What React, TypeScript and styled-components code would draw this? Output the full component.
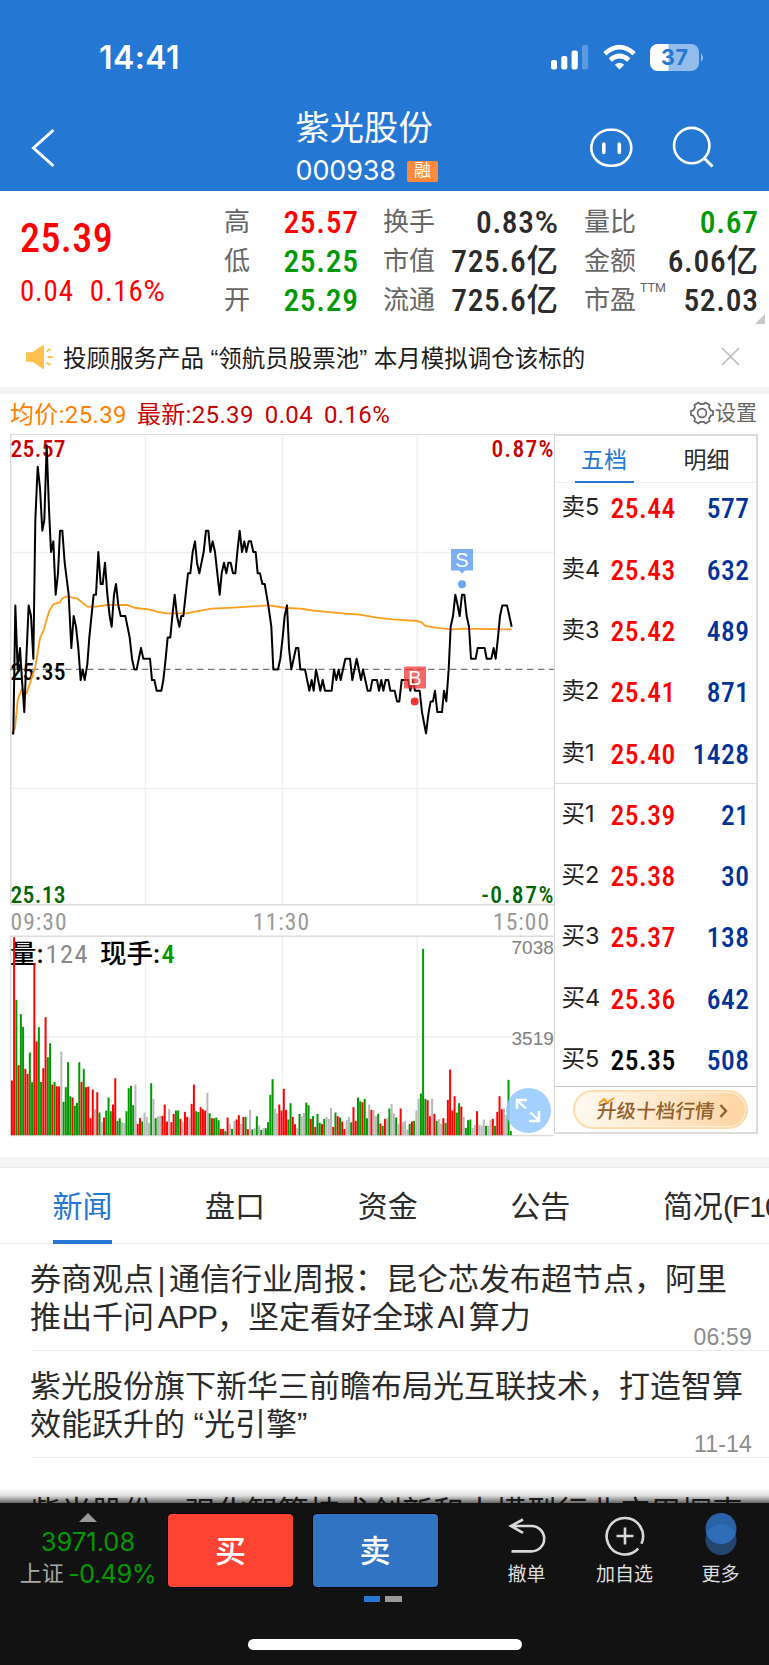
import React from 'react';
import styled, { createGlobalStyle } from 'styled-components';

const sans = `Inter, "Noto Sans CJK SC", sans-serif`;
const cjk = `"Liberation Sans", "Noto Sans CJK SC", sans-serif`;
const din = `Roboto, "Noto Sans CJK SC", sans-serif`;

const RED = '#ff0000';
const GREEN = '#009900';
const INK = '#2b2b2b';

const Global = createGlobalStyle`
  * { box-sizing: border-box; }
  body { margin: 0; background: #fff; font-family: ${cjk}; }
  svg { display: block; }
`;

const Screen = styled.main`
  width: 769px;
  height: 1665px;
  overflow: hidden;
  display: flex;
  flex-direction: column;
  background: #fff;
  color: ${INK};
  white-space: nowrap;
`;

/* ---------- header ---------- */
const Header = styled.header`
  flex: none;
  height: 191px;
  background: #2478d4;
  color: #fff;
`;
const StatusBar = styled.div`
  height: 106px;
  padding: 9px 64px 0 99px;
  display: flex;
  align-items: center;
  justify-content: space-between;
`;
const Clock = styled.span`
  font: 600 32px ${sans};
  letter-spacing: 0.4px;
`;
const NavBar = styled.div`
  height: 85px;
  display: grid;
  grid-template-columns: 295.5px 1fr auto;
  padding-right: 54px;
`;
const BackIcon = styled.svg`
  margin: 22px 0 0 30px;
`;
const TitleBlock = styled.div`
  display: flex;
  flex-direction: column;
`;
const StockName = styled.h1`
  margin: 1px 0 0;
  font: 400 34.3px/42px ${cjk};
`;
const CodeRow = styled.div`
  display: flex;
  align-items: center;
  gap: 11px;
  height: 24px;
  margin-top: 10px;
  font: 400 27px/24px ${sans};
  letter-spacing: -0.15px;
`;
const Badge = styled.span`
  width: 31px;
  height: 21px;
  border-radius: 2px;
  background: #ff8a3c;
  font: 400 17px/20px ${cjk};
  text-align: center;
`;
const NavIcons = styled.div`
  display: flex;
  gap: 39px;
  padding-top: 20px;
`;

/* ---------- quote ---------- */
const Quote = styled.section`
  flex: none;
  height: 136px;
  display: flex;
  padding: 12px 11px 0 20px;
  position: relative;
`;
const Headline = styled.div`
  width: 204px;
  color: ${RED};
  font-family: ${din};
  font-stretch: 87.5%;
`;
const LastPrice = styled.div`
  font-size: 40px;
  font-weight: 500;
  line-height: 48px;
  padding-top: 12px;
  letter-spacing: 0.4px;
`;
const Change = styled.div`
  display: flex;
  gap: 16px;
  margin-top: 8px;
  font-size: 29px;
  line-height: 40px;
  letter-spacing: 0.8px;
`;
const Percent = styled.span`
  font-stretch: 100%;
`;
const StatGroup = styled.div<{ $w: number; $ml?: number }>`
  width: ${p => p.$w}px;
  margin-left: ${p => p.$ml ?? 0}px;
`;
const Stat = styled.div`
  display: flex;
  justify-content: space-between;
  height: 39px;
  align-items: center;
`;
const StatLabel = styled.span`
  font: 400 26px/39px ${cjk};
  color: #666;
  display: flex;
`;
const Sup = styled.small`
  font: 400 12.5px/13px ${din};
  margin: 0 0 0 4px;
`;
const StatValue = styled.span<{ $c?: string }>`
  font: 480 31.5px/39px ${din};
  font-stretch: 87.5%;
  letter-spacing: 0.7px;
  margin-right: -0.7px;
  color: ${p => p.$c ?? INK};
`;
const Corner = styled.svg`
  position: absolute;
  right: 4px;
  bottom: 3px;
`;

/* ---------- notice ---------- */
const Notice = styled.section`
  flex: none;
  height: 60px;
  padding: 0 29px 1px 25px;
  display: flex;
  align-items: center;
  font-size: 23.5px;
  color: #1c1c1c;
`;
const NoticeText = styled.span`
  flex: 1;
  margin-left: 10px;
`;
const Band = styled.div<{ $h: number }>`
  flex: none;
  height: ${p => p.$h}px;
  background: #f4f4f4;
`;

/* ---------- chart ---------- */
const Legend = styled.div`
  flex: none;
  height: 40px;
  display: flex;
  align-items: center;
  padding: 1px 12px 0 10px;
  font: 400 24px/38px ${din};
  letter-spacing: 0.35px;
  color: #c80000;
`;
const LegendItem = styled.span<{ $c?: string; $ml?: number }>`
  color: ${p => p.$c ?? '#c80000'};
  margin-left: ${p => p.$ml ?? 0}px;
`;
const Settings = styled.span`
  margin-left: auto;
  display: flex;
  align-items: center;
  gap: 1px;
  margin-bottom: 3px;
  font: 400 21px/24px ${cjk};
  letter-spacing: 0;
  color: #666;
`;
const Market = styled.section`
  flex: none;
  display: flex;
  height: 723px;
  padding-left: 10px;
`;
const ChartColumn = styled.div`
  width: 543.5px;
  position: relative;
`;
const ExpandButton = styled.button`
  position: absolute;
  left: 496px;
  top: 654px;
  width: 45px;
  height: 45px;
  padding: 0;
  border: 0;
  border-radius: 50%;
  background: rgba(150, 201, 255, 0.88);
`;
const ChartText = styled.text<{ $font?: string }>`
  font-family: ${p => p.$font ?? din};
  font-stretch: 87.5%;
`;

/* ---------- order book ---------- */
const Book = styled.aside`
  width: 204px;
  height: 700px;
  border: 2px solid #dcdcdc;
  border-left: 1px solid #d4d4d4;
  display: flex;
  flex-direction: column;
`;
const BookTabs = styled.div`
  flex: none;
  height: 47px;
  display: flex;
  border-bottom: 1px solid #eee;
  padding-left: 20px;
  gap: 34px;
`;
const BookTab = styled.span<{ $on?: boolean }>`
  width: ${p => (p.$on ? 59 : 78)}px;
  height: 47px;
  text-align: center;
  font: 400 23px/48px ${cjk};
  color: ${p => (p.$on ? '#2478d4' : INK)};
  border-bottom: ${p => (p.$on ? '2px solid #2478d4' : '0')};
`;
const Levels = styled.div<{ $buy?: boolean }>`
  height: ${p => (p.$buy ? 303 : 301)}px;
  padding-top: ${p => (p.$buy ? 1 : 0)}px;
  border-bottom: 1px solid ${p => (p.$buy ? '#c4c4c4' : '#dcdcdc')};
`;
const Level = styled.div`
  display: grid;
  grid-template-columns: 49px 1fr auto;
  align-items: center;
  height: 61.35px;
  padding: 0 6px 0 7px;
`;
const SellLevels = styled(Levels)`
  margin-top: -4.5px;
  height: 305.5px;
`;
const LevelLabel = styled.span`
  font: 400 23.5px/30px ${sans};
  color: #222;
  margin-top: -4px;
`;
const LevelPrice = styled.span<{ $c?: string }>`
  font: 500 27.5px/30px ${din};
  font-stretch: 87.5%;
  letter-spacing: 0.5px;
  color: ${p => p.$c ?? RED};
`;
const UpgradeWrap = styled.div`
  flex: 1;
  display: flex;
  align-items: center;
  padding-left: 18px;
`;
const Upgrade = styled.button`
  width: 175px;
  height: 39px;
  padding: 2px 0 0 22px;
  border: 2px solid #ffdcb0;
  border-radius: 20px;
  background: linear-gradient(100deg, #fffaf3, #ffe9cf 45%, #ffd3a0);
  box-shadow: inset 0 0 0 1px rgba(255, 246, 232, 0.9);
  display: flex;
  align-items: center;
  gap: 5px;
  color: #94602b;
  font: 500 19.6px/30px ${cjk};
`;
const UpgradeText = styled.span`
  position: relative;
  transform: skewX(-6deg);
`;
const Spark = styled.svg`
  position: absolute;
  left: 0;
  top: 1px;
`;

/* ---------- news ---------- */
const Tabs = styled.nav`
  flex: none;
  height: 77px;
  border-top: 1px solid #e9e9e9;
  border-bottom: 1px solid #ececec;
  padding-left: 52.5px;
  display: flex;
`;
const Tab = styled.a<{ $on?: boolean }>`
  flex: none;
  width: 152.6px;
  font: 400 30px/78px ${cjk};
  color: ${p => (p.$on ? '#2478d4' : INK)};
  &::after {
    content: '';
    display: ${p => (p.$on ? 'block' : 'none')};
    width: 59px;
    height: 4px;
    margin-top: -6px;
    background: #2478d4;
  }
`;
const TabCode = styled.span`
  letter-spacing: -1px;
`;
const News = styled.article`
  flex: none;
  height: 107px;
  margin-left: 31px;
  padding-top: 3px;
  border-bottom: 1px solid #ececec;
  display: flex;
  flex-direction: column;
  justify-content: center;
  position: relative;
`;
const NewsTitle = styled.div<{ $tight?: boolean }>`
  margin-left: -1px;
  font: 400 31px/37.5px ${cjk};
  white-space: pre;
  word-spacing: ${p => (p.$tight ? -5 : 0)}px;
`;
const Latin = styled.span`
  letter-spacing: -0.9px;
`;
const Pipe = styled.span`
  padding: 0 3.5px;
`;
const NewsTime = styled.time`
  position: absolute;
  right: 17px;
  bottom: 0;
  font: 400 23px/26px ${cjk};
  letter-spacing: 0.2px;
  color: #8c8c8c;
`;
const NewsList = styled.div`
  flex: none;
  height: 259px;
  overflow: hidden;
  position: relative;
  &::after {
    content: '';
    position: absolute;
    inset: auto 0 0 0;
    height: 15px;
    background: linear-gradient(rgba(0, 0, 0, 0), rgba(0, 0, 0, 0.12) 50%, rgba(0, 0, 0, 0.6));
  }
`;

/* ---------- bottom bar ---------- */
const Footer = styled.footer`
  flex: none;
  height: 162px;
  background: #121212;
  display: flex;
  flex-direction: column;
  align-items: center;
`;
const Actions = styled.div`
  width: 100%;
  height: 93px;
  display: flex;
  padding: 10px 0 0 16px;
`;
const Index = styled.div`
  width: 144px;
  display: flex;
  flex-direction: column;
  align-items: center;
  color: ${GREEN};
  font: 400 25.5px/32px ${sans};
`;
const IndexValue = styled.span`
  letter-spacing: 0;
  margin-top: 4px;
`;
const IndexLine = styled.span`
  display: flex;
  align-items: center;
  gap: 4px;
  letter-spacing: -0.6px;
`;
const IndexName = styled.span`
  font: 400 22px/32px ${cjk};
  color: #a8a8a8;
  letter-spacing: 0;
`;
const TradeButton = styled.button<{ $bg: string }>`
  width: 125px;
  height: 73px;
  margin: 1px 0 0 ${p => (p.$bg === '#ff4332' ? 8 : 19.5)}px;
  padding: 3px 0 0;
  border: 0;
  border-radius: 4px;
  background: ${p => p.$bg};
  box-shadow: 0 0 0 1px #000;
  color: #fff;
  font: 500 31px/40px ${cjk};
`;
const Tools = styled.div`
  display: flex;
  margin-left: 53px;
`;
const Tool = styled.div<{ $w: number }>`
  width: ${p => p.$w}px;
  display: flex;
  flex-direction: column;
  align-items: center;
  font: 400 19px/26px ${cjk};
  color: #dedede;
  gap: 5px;
`;
const Pager = styled.div`
  display: flex;
  gap: 5px;
  margin-left: -4px;
`;
const Page = styled.i<{ $c: string }>`
  width: 16.5px;
  height: 6px;
  background: ${p => p.$c};
`;
const HomeIndicator = styled.div`
  width: 274px;
  height: 11px;
  margin-top: 37px;
  border-radius: 6px;
  background: #fff;
`;

/* ---------- chart data ---------- */
// One tick is 0.01 yuan; x is measured in thirds of a pixel from the left edge.
const PRICE: number[] = [
  36,-6,40,-6,46,6,53,0,60,2,66,-1,73,-4,79,1,86,6,93,5,100,1,106,14,113,19,120,17,127,13,133,14,140,21,147,15,153,11,160,12,167,7,174,9,180,13,187,13,194,10,206,7,
  214,2,221,5,228,4,235,2,242,-1,248,0,254,-1,262,0.5,268,3,281,7,288,7,295,11,302,8,308,8,315,10,322,7,329,5,335,4,342,7,348,8,355,6,362,5,376,5,389,3,396,1,403,0,
  410,0,423,2,430,1,450,1,456,-1,463,-1,470,-2,484,-2,490,-1,497,1,503,3,511,3,517,5,524,7,531,5,538,4,544,5,550,5,557,7,564,9,571,9,578,11,585,12,591,10,598,9,611,11,
  618,13,625,13,631,11,638,12,645,11,652,9,659,7,665,9,672,10,679,9,685,10,692,10,699,9,706,9,712,11,719,13,726,11,733,12,739,11,746,12,753,12,760,11,767,11,773,9,780,9,
  787,8,794,8,805,6,814,4,820,0,834,0,841,1,848,3,854,5,861,6,867,2,874,0,888,2,895,2,901,0,915,0,928,-2,935,-1,941,-2,948,0,961,-2,968,-1,975,-2,995,-2,1002,0,1009,-1,
  1016,0,1022,-1,1036,1,1050,1,1057,-1,1070,1,1083,-1,1089,0,1103,-2,1111,-2,1117,-1,1131,-1,1137,-2,1144,-1,1150,-2,1157,-1,1165,-1,1171,-2,1184,-2,1191,-3,1198,-3,
  1205,-1,1225,-1,1231,-2,1238,-1,1245,-2,1259,-2,1266,-4,1278,-6,1286,-4,1292,-3,1299,-3,1305,-2,1312,-4,1326,-4,1332,-2,1339,-3,1346,0,1352,4,1359,5,1366,7,1373,6,
  1379,5,1386,7,1393,7,1400,5,1407,4,1413,1,1427,1,1433,2,1454,2,1460,1,1474,1,1481,2,1487,1,1494,3,1500,5,1507,6,1521,6,1528,5,1535,4,
];
const AVERAGE: number[] = [
  36,940,45,925,53,840,66,805,80,820,93,780,106,740,120,655,133,625,140,598,148,572,160,553,180,547,187,535,200,529,232,536,262,560,290,560,320,555,380,555,408,564,450,569,
  470,575,500,580,560,580,590,574,635,566,700,563,805,556,860,564,901,566,910,567,940,572,1030,580,1080,584,1130,593,1180,598,1250,603,1265,607,1275,617,1300,622,1355,628,1390,626,1535,628,
];
// Per-minute volume: direction (r up, g down, n flat) and the bar's top.
const VOLUME =
  'r632 r202 g390 r586 g433 g471 r597 r612 g548 g637 r280 r515 g472 g636 r595 r442 g562 g520 r644 g636 r649 r650 n545 g696 g652 g577 g679 r683 g708 g699 g577 r636 g597 r652 r650 r745 r659 n718 r667 g728 ' +
  'n756 r743 g722 g683 g724 r704 r625 g753 g745 n757 n760 g724 g655 g648 g706 n644 r762 r745 g755 n728 n741 n759 g640 n687 g745 n740 n738 r738 r704 r755 n718 r757 r732 g722 g722 r747 n757 r726 r741 n743 ' +
  'r702 r644 g724 g726 r712 r718 r722 n669 g730 r745 g745 g743 g751 r777 r777 g784 r743 n763 g777 n753 r749 r736 n762 r741 g741 r778 n720 g779 n775 g739 n767 g780 n775 g775 g757 g675 g628 n716 n730 r704 ' +
  'r722 r657 r720 g749 g700 r741 r763 n775 g732 n739 n729 g698 g706 r747 g739 r771 g732 g759 r763 g747 n741 n747 n714 r771 g728 r739 g743 r755 r777 n751 n741 g757 r712 r753 g683 g694 r697 g687 g745 n704 ' +
  'r720 n722 n739 g732 r761 g768 r747 n745 g716 n702 n730 g743 n763 r716 n757 n753 n779 g762 r755 g753 n722 n687 g671 g237 g687 r691 r739 n687 r732 g753 n748 n762 r745 g759 r690 r599 r722 r679 g728 g700 ' +
  'r710 n741 g774 g751 g749 n774 n765 r724 n765 n767 n749 g768 n768 n751 r747 g768 r726 r679 r718 n716 n735 g630 g783';

const pairs = (a: number[], y: (v: number) => number) => {
  const out: string[] = [];
  for (let i = 0; i < a.length; i += 2) out.push(`${(a[i] / 3 - 10).toFixed(2)},${y(a[i + 1]).toFixed(2)}`);
  return out.join(' ');
};
const pricePoints = pairs(PRICE, v => 235.4 - v * 10.67);
const averagePoints = pairs(AVERAGE, v => v / 3 - 14);
const barColor: Record<string, string> = { r: '#ff0000', g: '#009900', n: '#b8b8b8' };
const bars = VOLUME.split(' ').map((s, i) => {
  const h = (796 - Number(s.slice(1))) / 3;
  return { x: (35.6 + 6.742 * i) / 3 - 11, y: 701.2 - h, h, fill: barColor[s[0]] };
});

const Chart = () => (
  <svg width="544" height="710" viewBox="0 0 544 710">
    <g stroke="#f0f0f0" strokeWidth="1.4">
      {[135.4, 272.5, 407.2].map(x => (
        <path key={x} d={`M${x} 1V470.5M${x} 502V701`} />
      ))}
      <path d="M1 118.5H544M1 354.5H544M1 603H544" />
    </g>
    <g stroke="#dcdcdc" strokeWidth="1.4" fill="none">
      <path d="M0.7 471V0.3H544M0.7 470.7H544M0.7 701.5V502.3H544M0.7 701.5H544" />
    </g>
    <path d="M0 235.4H544" stroke="#777" strokeWidth="1.3" strokeDasharray="6.5 4.5" />
    <g fontSize="23.5" fontWeight="480">
      <ChartText x="0.5" y="22.5" fill="#c80000" textLength="55">25.57</ChartText>
      <ChartText x="481.5" y="22.5" fill="#c80000" textLength="62">0.87%</ChartText>
      <ChartText x="0.5" y="468.5" fill="#006600" textLength="55">25.13</ChartText>
      <ChartText x="471.5" y="468.5" fill="#006600" textLength="72">-0.87%</ChartText>
      <ChartText x="0.5" y="245.5" fill="#000" textLength="55">25.35</ChartText>
      <g fill="#999" fontWeight="400">
        <ChartText x="0.5" y="496" textLength="56">09:30</ChartText>
        <ChartText x="243" y="496" textLength="56">11:30</ChartText>
        <ChartText x="483" y="496" textLength="56">15:00</ChartText>
      </g>
    </g>
    <polyline points={averagePoints} fill="none" stroke="#ff9d1c" strokeWidth="1.8" />
    <polyline points={pricePoints} fill="none" stroke="#000" strokeWidth="2" strokeLinejoin="round" />
    <g fontSize="26.5" fontWeight="500">
      <ChartText x="0" y="528.5" fill="#000">量:</ChartText>
      <ChartText x="35.5" y="528.5" fill="#8a8a8a" fontWeight="400" textLength="42">124</ChartText>
      <ChartText x="90" y="528.5" fill="#000">现手:</ChartText>
      <ChartText x="151.5" y="528.5" fill={GREEN}>4</ChartText>
    </g>
    <g fontSize="19" fill="#808080">
      <ChartText $font={cjk} x="501.5" y="519.5">7038</ChartText>
      <ChartText $font={cjk} x="501.5" y="611">3519</ChartText>
    </g>
    {bars.map((b, i) => (
      <rect key={i} x={b.x} y={b.y} width="2" height={b.h} fill={b.fill} />
    ))}
    <g fill="#6ba6f2">
      <path d="M441 115H463V136.5H455L452 139.5L449 136.5H441Z" opacity="0.9" />
      <circle cx="452" cy="150.3" r="4" />
    </g>
    <g fill="#f03535">
      <rect x="394" y="232.5" width="22" height="22" rx="1" opacity="0.75" />
      <circle cx="404.7" cy="267.6" r="4" />
    </g>
    <g fill="#fff" fontSize="20" textAnchor="middle">
      <ChartText $font={cjk} x="452" y="133">S</ChartText>
      <ChartText $font={cjk} x="405" y="250.5">B</ChartText>
    </g>
  </svg>
);

const sells = [['卖5', '25.44', '577'], ['卖4', '25.43', '632'], ['卖3', '25.42', '489'], ['卖2', '25.41', '871'], ['卖1', '25.40', '1428']];
const buys = [['买1', '25.39', '21'], ['买2', '25.38', '30'], ['买3', '25.37', '138'], ['买4', '25.36', '642'], ['买5', '25.35', '508']];

const LevelRow = ({ row }: { row: string[] }) => (
  <Level>
    <LevelLabel>{row[0]}</LevelLabel>
    <LevelPrice $c={row[1] === '25.35' ? '#000' : RED}>{row[1]}</LevelPrice>
    <LevelPrice $c="#003399">{row[2]}</LevelPrice>
  </Level>
);

const StatusIcons = () => (
  <svg width="156" height="32" viewBox="550 42 156 32" fill="#fff">
    <rect x="552" y="60" width="6" height="9.5" rx="2" />
    <rect x="562.3" y="56" width="6" height="13.5" rx="2" />
    <rect x="572.6" y="50.5" width="6.2" height="19" rx="2" />
    <rect x="583" y="45" width="6.2" height="24.5" rx="2" opacity="0.25" />
    <g fill="none" stroke="#fff" strokeWidth="4.6">
      <path d="M605.8 53.8Q620.5 40.5 635.2 53.8" />
      <path d="M611.2 60Q620.5 52 629.8 60" />
    </g>
    <path d="M615.8 64.8Q620.5 60.8 625.2 64.8L620.5 69.5Z" />
    <rect x="651" y="44" width="49" height="27" rx="8" opacity="0.5" />
    <path d="M659 44H669.5V71H659A8 8 0 0 1 651 63V52A8 8 0 0 1 659 44Z" />
    <path d="M702 53Q706 57.5 702 62Z" opacity="0.5" />
    <ChartText $font={sans} x="675.5" y="65.3" fill="#2478d4" fontSize="21.5" fontWeight="700" textAnchor="middle" textLength="27">37</ChartText>
  </svg>
);

export default function App() {
  return (
    <Screen>
      <Global />
      <Header>
        <StatusBar>
          <Clock>14:41</Clock>
          <StatusIcons />
        </StatusBar>
        <NavBar>
          <BackIcon width="26" height="40" viewBox="0 0 26 40" fill="none" stroke="#fff" strokeWidth="3">
            <path d="M23.5 2L3.5 20L23.5 38" />
          </BackIcon>
          <TitleBlock>
            <StockName>紫光股份</StockName>
            <CodeRow>000938<Badge>融</Badge></CodeRow>
          </TitleBlock>
          <NavIcons>
            <svg width="44" height="44" viewBox="0 0 44 44" fill="none" stroke="#fff" strokeWidth="2.6">
              <rect x="2.3" y="3.8" width="40" height="36" rx="19" ry="18" />
              <path d="M14.8 18V26.5M30.3 18V26.5" strokeWidth="3.6" strokeLinecap="round" />
            </svg>
            <svg width="43" height="44" viewBox="0 0 43 44" fill="none" stroke="#fff" strokeWidth="2.6">
              <circle cx="19.7" cy="19.6" r="17.7" />
              <path d="M32.5 32.5L40.5 40.5" strokeWidth="3" />
            </svg>
          </NavIcons>
        </NavBar>
      </Header>

      <Quote>
        <Headline>
          <LastPrice>25.39</LastPrice>
          <Change><span>0.04</span><span>0.16<Percent>%</Percent></span></Change>
        </Headline>
        <StatGroup $w={134}>
          <Stat><StatLabel>高</StatLabel><StatValue $c={RED}>25.57</StatValue></Stat>
          <Stat><StatLabel>低</StatLabel><StatValue $c={GREEN}>25.25</StatValue></Stat>
          <Stat><StatLabel>开</StatLabel><StatValue $c={GREEN}>25.29</StatValue></Stat>
        </StatGroup>
        <StatGroup $w={175} $ml={25}>
          <Stat><StatLabel>换手</StatLabel><StatValue>0.83<Percent>%</Percent></StatValue></Stat>
          <Stat><StatLabel>市值</StatLabel><StatValue>725.6亿</StatValue></Stat>
          <Stat><StatLabel>流通</StatLabel><StatValue>725.6亿</StatValue></Stat>
        </StatGroup>
        <StatGroup $w={174} $ml={26}>
          <Stat><StatLabel>量比</StatLabel><StatValue $c={GREEN}>0.67</StatValue></Stat>
          <Stat><StatLabel>金额</StatLabel><StatValue>6.06亿</StatValue></Stat>
          <Stat><StatLabel>市盈<Sup>TTM</Sup></StatLabel><StatValue>52.03</StatValue></Stat>
        </StatGroup>
        <Corner width="10" height="10"><path d="M10 0V10H0Z" fill="#c8c8c8" /></Corner>
      </Quote>

      <Notice>
        <svg width="28" height="26" viewBox="0 0 28 26">
          <path d="M1.8 8.3H7.5L17.6 1.2Q19 0.6 19 2V24Q19 25.4 17.6 24.8L7.5 17.7H1.8Q1 17.7 1 16.9V9.1Q1 8.3 1.8 8.3Z" fill="#ffc04d" />
          <path d="M22.5 13H28M21.5 7.5L25.5 4.8M21.5 18.5L25.5 21.2" stroke="#ffc04d" strokeWidth="2" />
        </svg>
        <NoticeText>投顾服务产品 “领航员股票池” 本月模拟调仓该标的</NoticeText>
        <svg width="19" height="19" viewBox="0 0 19 19" stroke="#bbb" strokeWidth="1.6"><path d="M1 1L18 18M18 1L1 18" /></svg>
      </Notice>
      <Band $h={7} />

      <Legend>
        <LegendItem $c="#ff8000">均价:25.39</LegendItem>
        <LegendItem $ml={10}>最新:25.39</LegendItem>
        <LegendItem $ml={11}>0.04</LegendItem>
        <LegendItem $ml={11}>0.16%</LegendItem>
        <Settings>
          <svg width="24" height="24" viewBox="0 0 24 24" fill="none" stroke="#666" strokeWidth="1.7">
            <path d="M8.5 1.5L10.2 3.2H13.8L15.5 1.5L19.6 3.9L19 6.3L20.8 9.4L23 10V14L20.8 14.6L19 17.7L19.6 20.1L15.5 22.5L13.8 20.8H10.2L8.5 22.5L4.4 20.1L5 17.7L3.2 14.6L1 14V10L3.2 9.4L5 6.3L4.4 3.9Z" />
            <circle cx="12" cy="12" r="4.4" />
          </svg>
          设置
        </Settings>
      </Legend>

      <Market>
        <ChartColumn>
          <Chart />
          <ExpandButton aria-label="expand">
            <svg width="45" height="45" viewBox="0 0 45 45" fill="none" stroke="#fff" strokeWidth="2.4">
              <path d="M11 21V12H21M11.5 12.5L20 20.5M24.5 24.5L33 32.5M33 23V33H23" />
            </svg>
          </ExpandButton>
        </ChartColumn>
        <Book>
          <BookTabs>
            <BookTab $on>五档</BookTab>
            <BookTab>明细</BookTab>
          </BookTabs>
          <SellLevels>{sells.map(r => <LevelRow key={r[0]} row={r} />)}</SellLevels>
          <Levels $buy>{buys.map(r => <LevelRow key={r[0]} row={r} />)}</Levels>
          <UpgradeWrap>
            <Upgrade>
              <UpgradeText>
                升级十档行情
                <Spark width="18" height="8" viewBox="0 0 18 8" fill="none" stroke="#ff9a1f" strokeWidth="2">
                  <path d="M1 6.5L6 2L9 5.5L16 1" />
                </Spark>
              </UpgradeText>
              <svg width="9" height="14" viewBox="0 0 9 14" fill="none" stroke="#94602b" strokeWidth="2.4"><path d="M1.5 1L7 7L1.5 13" /></svg>
            </Upgrade>
          </UpgradeWrap>
        </Book>
      </Market>

      <Band $h={10} />
      <Tabs>
        <Tab $on>新闻</Tab>
        <Tab>盘口</Tab>
        <Tab>资金</Tab>
        <Tab>公告</Tab>
        <Tab>简况<TabCode>(F10)</TabCode></Tab>
      </Tabs>
      <NewsList>
        <News>
          <NewsTitle $tight>
            券商观点<Pipe>|</Pipe>{'通信行业周报：昆仑芯发布超节点，阿里\n推出千问 '}<Latin>APP</Latin>{'，坚定看好全球 '}<Latin>AI</Latin>{' 算力'}
          </NewsTitle>
          <NewsTime>06:59</NewsTime>
        </News>
        <News>
          <NewsTitle>{'紫光股份旗下新华三前瞻布局光互联技术，打造智算\n效能跃升的 “光引擎”'}</NewsTitle>
          <NewsTime>11-14</NewsTime>
        </News>
        <News>
          <NewsTitle>紫光股份：强化智算技术创新和大模型行业应用探索</NewsTitle>
        </News>
      </NewsList>

      <Footer>
        <Actions>
          <Index>
            <svg width="18" height="9"><path d="M9 0L18 9H0Z" fill="#999" /></svg>
            <IndexValue>3971.08</IndexValue>
            <IndexLine><IndexName>上证</IndexName>-0.49%</IndexLine>
          </Index>
          <TradeButton $bg="#ff4332">买</TradeButton>
          <TradeButton $bg="#3174c3">卖</TradeButton>
          <Tools>
            <Tool $w={72}>
              <svg width="40" height="44" viewBox="0 0 40 44" fill="none" stroke="#d8d8d8" strokeWidth="2.6">
                <path d="M16 6.5L4 13L16 19.8M4.5 13H24.5A12.7 12.7 0 0 1 24.5 38.4H4.5" />
              </svg>
              撤单
            </Tool>
            <Tool $w={124}>
              <svg width="42" height="44" viewBox="0 0 42 44" fill="none" stroke="#d8d8d8" strokeWidth="2.6">
                <path d="M37.4 30.8A18.2 18.2 0 1 0 34.2 35.6M21 14.5V31.5M12.5 23H29.5" />
              </svg>
              加自选
            </Tool>
            <Tool $w={68}>
              <svg width="40" height="44" viewBox="0 0 40 44">
                <circle cx="20" cy="26.5" r="15.5" fill="#24466e" />
                <circle cx="20" cy="15.5" r="15.5" fill="#2a62a8" />
                <path d="M5.5 21A15.5 15.5 0 0 1 34.5 21A15.5 15.5 0 0 1 5.5 21Z" fill="#2f6db8" />
              </svg>
              更多
            </Tool>
          </Tools>
        </Actions>
        <Pager><Page $c="#2478d4" /><Page $c="#999" /></Pager>
        <HomeIndicator />
      </Footer>
    </Screen>
  );
}
